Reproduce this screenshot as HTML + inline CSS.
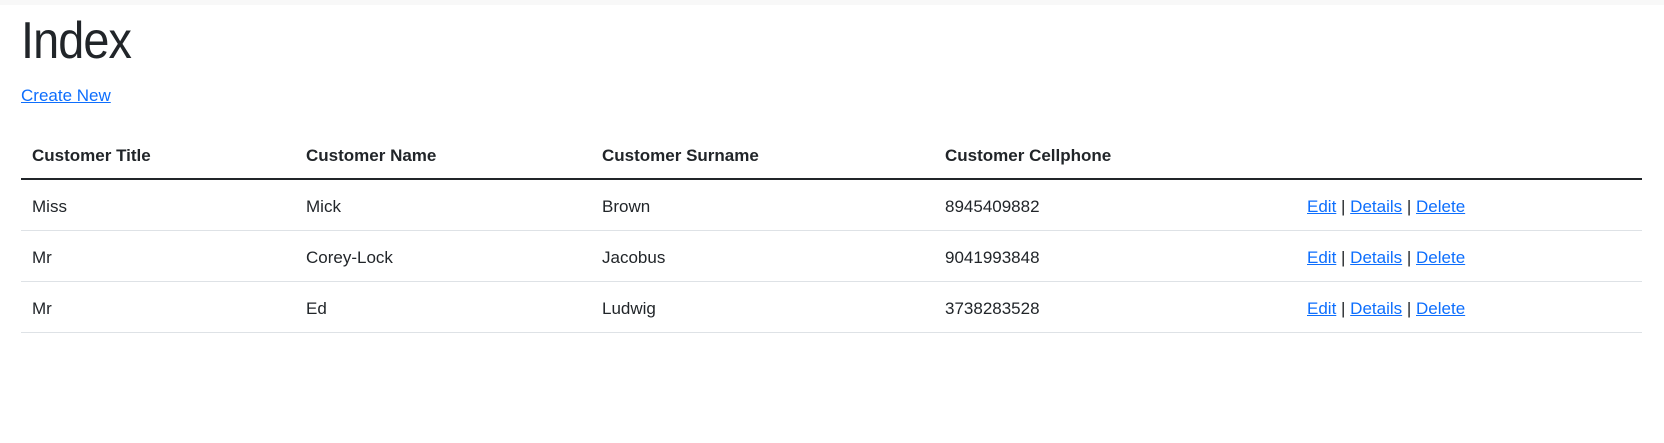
<!DOCTYPE html>
<html><head><style>
body{margin:0;background:#fff;font-family:"Liberation Sans",sans-serif;color:#212529;width:1664px;height:443px;overflow:hidden;position:relative}
.top{position:absolute;left:0;top:0;width:1664px;height:5px;background:#f8f8f8}
h1{position:absolute;left:21px;top:11px;margin:0;font-size:52px;font-weight:400;letter-spacing:-1px;transform:scaleX(0.9);transform-origin:left}
a{color:#0d6efd;text-decoration:underline}
.cn{position:absolute;left:21px;top:86px;font-size:17px}
table{position:absolute;left:21px;top:131px;border-collapse:collapse;width:1621px;table-layout:fixed;font-size:17px}
th{text-align:left;font-weight:bold;height:45px;padding:2px 0 0 11px;border-bottom:2px solid #212529}
td{height:46px;padding:4px 0 0 11px;border-bottom:1px solid #dee2e6}
</style></head><body>
<div class="top"></div>
<h1>Index</h1>
<a class="cn" href="#">Create New</a>
<table>
<colgroup><col style="width:274px"><col style="width:296px"><col style="width:343px"><col style="width:362px"><col></colgroup>
<tr><th>Customer Title</th><th>Customer Name</th><th>Customer Surname</th><th>Customer Cellphone</th><th></th></tr>
<tr><td>Miss</td><td>Mick</td><td>Brown</td><td>8945409882</td><td><a href="#">Edit</a> | <a href="#">Details</a> | <a href="#">Delete</a></td></tr>
<tr><td>Mr</td><td>Corey-Lock</td><td>Jacobus</td><td>9041993848</td><td><a href="#">Edit</a> | <a href="#">Details</a> | <a href="#">Delete</a></td></tr>
<tr><td>Mr</td><td>Ed</td><td>Ludwig</td><td>3738283528</td><td><a href="#">Edit</a> | <a href="#">Details</a> | <a href="#">Delete</a></td></tr>
</table>
</body></html>
